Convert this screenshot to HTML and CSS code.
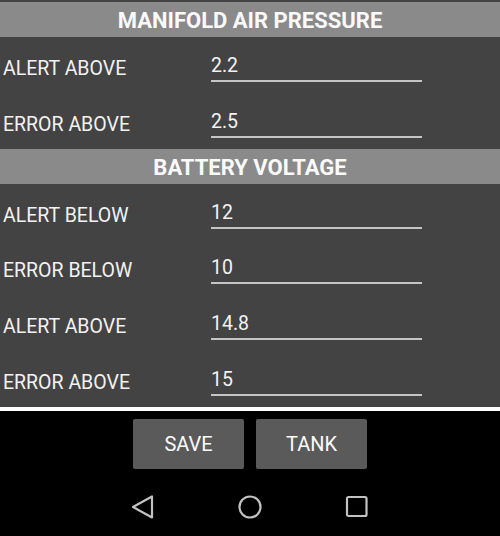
FILE: index.html
```html
<!DOCTYPE html>
<html>
<head>
<meta charset="utf-8">
<link rel="stylesheet" href="styles.css">
</head>
<body>
<div class="screen">
  <div class="panel">
    <div class="section-header">MANIFOLD AIR PRESSURE</div>
    <div class="row"><div class="label">ALERT ABOVE</div><div class="field">2.2</div></div>
    <div class="row"><div class="label">ERROR ABOVE</div><div class="field">2.5</div></div>
    <div class="section-header">BATTERY VOLTAGE</div>
    <div class="row"><div class="label">ALERT BELOW</div><div class="field">12</div></div>
    <div class="row"><div class="label">ERROR BELOW</div><div class="field">10</div></div>
    <div class="row"><div class="label">ALERT ABOVE</div><div class="field">14.8</div></div>
    <div class="row"><div class="label">ERROR ABOVE</div><div class="field">15</div></div>
  </div>
  <div class="divider"></div>
  <div class="actions">
    <div class="btn">SAVE</div>
    <div class="btn">TANK</div>
  </div>
  <div class="nav">
    <div class="nav-item">
      <svg width="24" height="26" viewBox="0 0 24 26"><path d="M21 2.5 L21 23.5 L2 13 Z" fill="none" stroke="#c2c2c2" stroke-width="2.2" stroke-linejoin="round"/></svg>
    </div>
    <div class="nav-item">
      <svg width="26" height="26" viewBox="0 0 26 26"><circle cx="13" cy="13" r="10.5" fill="none" stroke="#c2c2c2" stroke-width="2.2"/></svg>
    </div>
    <div class="nav-item">
      <svg width="24" height="24" viewBox="0 0 24 24"><rect x="2" y="2" width="19.5" height="19" rx="1.5" fill="none" stroke="#c2c2c2" stroke-width="2.2"/></svg>
    </div>
  </div>
</div>
</body>
</html>
```

FILE: styles.css
```css
html, body {
  margin: 0;
  padding: 0;
  background: #000;
}
.screen {
  width: 500px;
  height: 536px;
  background: #000;
  font-family: Roboto, "Liberation Sans", sans-serif;
  overflow: hidden;
}
.panel {
  background: #434343;
  padding-top: 2px;
}
.section-header {
  background: #8a8a8a;
  color: #fafafa;
  font-weight: bold;
  font-size: 22px;
  height: 35px;
  box-sizing: border-box;
  padding-top: 3px;
  line-height: 32px;
  text-align: center;
}
.row {
  display: grid;
  grid-template-columns: 211px 211px;
  height: 55.75px;
  color: #f2f2f2;
  font-size: 19.5px;
}
.label {
  padding-left: 3px;
  padding-top: 22px;
  line-height: 20px;
}
.field {
  align-self: start;
  padding-top: 19px;
  padding-bottom: 4px;
  line-height: 20px;
  border-bottom: 2px solid #c4c4c4;
}
.divider {
  height: 4px;
  background: #fff;
}
.actions {
  display: flex;
  justify-content: center;
  gap: 12px;
  padding-top: 8.5px;
}
.btn {
  width: 111px;
  height: 50px;
  background: #5a5a5a;
  border-radius: 2px;
  color: #fafafa;
  font-size: 20px;
  display: flex;
  align-items: center;
  justify-content: center;
}
.nav {
  display: flex;
  justify-content: center;
  margin-top: 18px;
  height: 40px;
}
.nav-item {
  width: 107px;
  display: flex;
  align-items: center;
  justify-content: center;
}
```
